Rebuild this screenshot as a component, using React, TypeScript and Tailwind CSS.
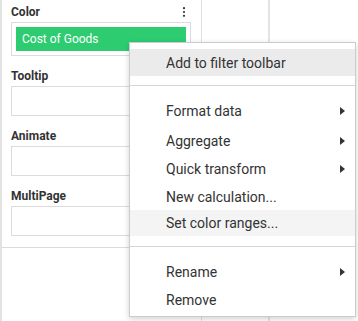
import React from "react";

function Arrow() {
  return (
    <span className="block w-0 h-0 border-y-[4px] border-y-transparent border-l-[5px] border-l-[#333333]" />
  );
}

function Item({
  label,
  h,
  bg,
  arrow,
}: {
  label: string;
  h: string;
  bg?: string;
  arrow?: boolean;
}) {
  return (
    <div className={`flex items-center justify-between pl-[36px] pr-[10px] ${h} ${bg ?? ""}`}>
      <span className="leading-none">{label}</span>
      {arrow ? <Arrow /> : null}
    </div>
  );
}

function Field({ label, children, boxH }: { label: string; children?: React.ReactNode; boxH: string }) {
  return (
    <div className="flex flex-col">
      <div className="h-[16px] leading-[16px] text-[12px] font-bold text-[#333333]">{label}</div>
      <div className={`mt-[2px] w-[180px] ${boxH} border border-[#dcdcdc] bg-white`}>{children}</div>
    </div>
  );
}

export default function App() {
  return (
    <div
      className="relative w-[358px] h-[321px] overflow-hidden bg-white flex"
      style={{ fontFamily: "Roboto, 'Liberation Sans', sans-serif" }}
    >
      {/* left panel */}
      <div className="w-[202px] h-full border-l-2 border-r border-l-[#e2e2e2] border-r-[#e0e0e0] flex flex-col">
        <div className="pl-[9px] pt-[4px] pb-[11px] border-b border-[#dadada] flex flex-col gap-[12px]">
          <div className="flex flex-col">
            <div className="w-[180px] h-[16px] flex items-center justify-between pr-[5px]">
              <span className="leading-[16px] text-[12px] font-bold text-[#333333]">Color</span>
              <svg width="4" height="14" viewBox="0 0 4 14" className="block">
                <circle cx="2" cy="3.2" r="1.1" fill="#333333" />
                <circle cx="2" cy="7" r="1.1" fill="#333333" />
                <circle cx="2" cy="10.8" r="1.1" fill="#333333" />
              </svg>
            </div>
            <div className="mt-[2px] w-[180px] h-[34px] border border-[#dcdcdc] p-[4px]">
              <div className="h-[24px] bg-[#2ecc71] pl-[6px] text-white text-[12px] leading-[24px]">
                Cost of Goods
              </div>
            </div>
          </div>
          <Field label="Tooltip" boxH="h-[30px]" />
          <Field label="Animate" boxH="h-[30px]" />
          <Field label="MultiPage" boxH="h-[30px]" />
        </div>
        <div className="flex-1" />
      </div>
      {/* second column */}
      <div className="w-[68px] h-full border-r-2 border-[#e4e4e4]" />
      <div className="flex-1 h-full" />

      {/* context menu */}
      <div className="absolute left-[129px] top-[42px] w-[227px] bg-white border border-[#cccccc] shadow-[0_2px_6px_rgba(0,0,0,0.18)] text-[14px] text-[#333333] pt-[6px] pb-[2px]">
        <Item label="Add to filter toolbar" h="h-[27px]" bg="bg-[#ebebeb]" />
        <div className="mt-[9px] mb-[10px] h-px bg-[#d6d6d6]" />
        <Item label="Format data" h="h-[30px]" arrow />
        <Item label="Aggregate" h="h-[29px]" arrow />
        <Item label="Quick transform" h="h-[28px]" arrow />
        <Item label="New calculation..." h="h-[27px]" />
        <Item label="Set color ranges..." h="h-[26px]" bg="bg-[#f4f4f4]" />
        <div className="mt-[10px] mb-[11px] h-px bg-[#d6d6d6]" />
        <Item label="Rename" h="h-[28px]" arrow />
        <Item label="Remove" h="h-[28px]" />
      </div>
    </div>
  );
}
